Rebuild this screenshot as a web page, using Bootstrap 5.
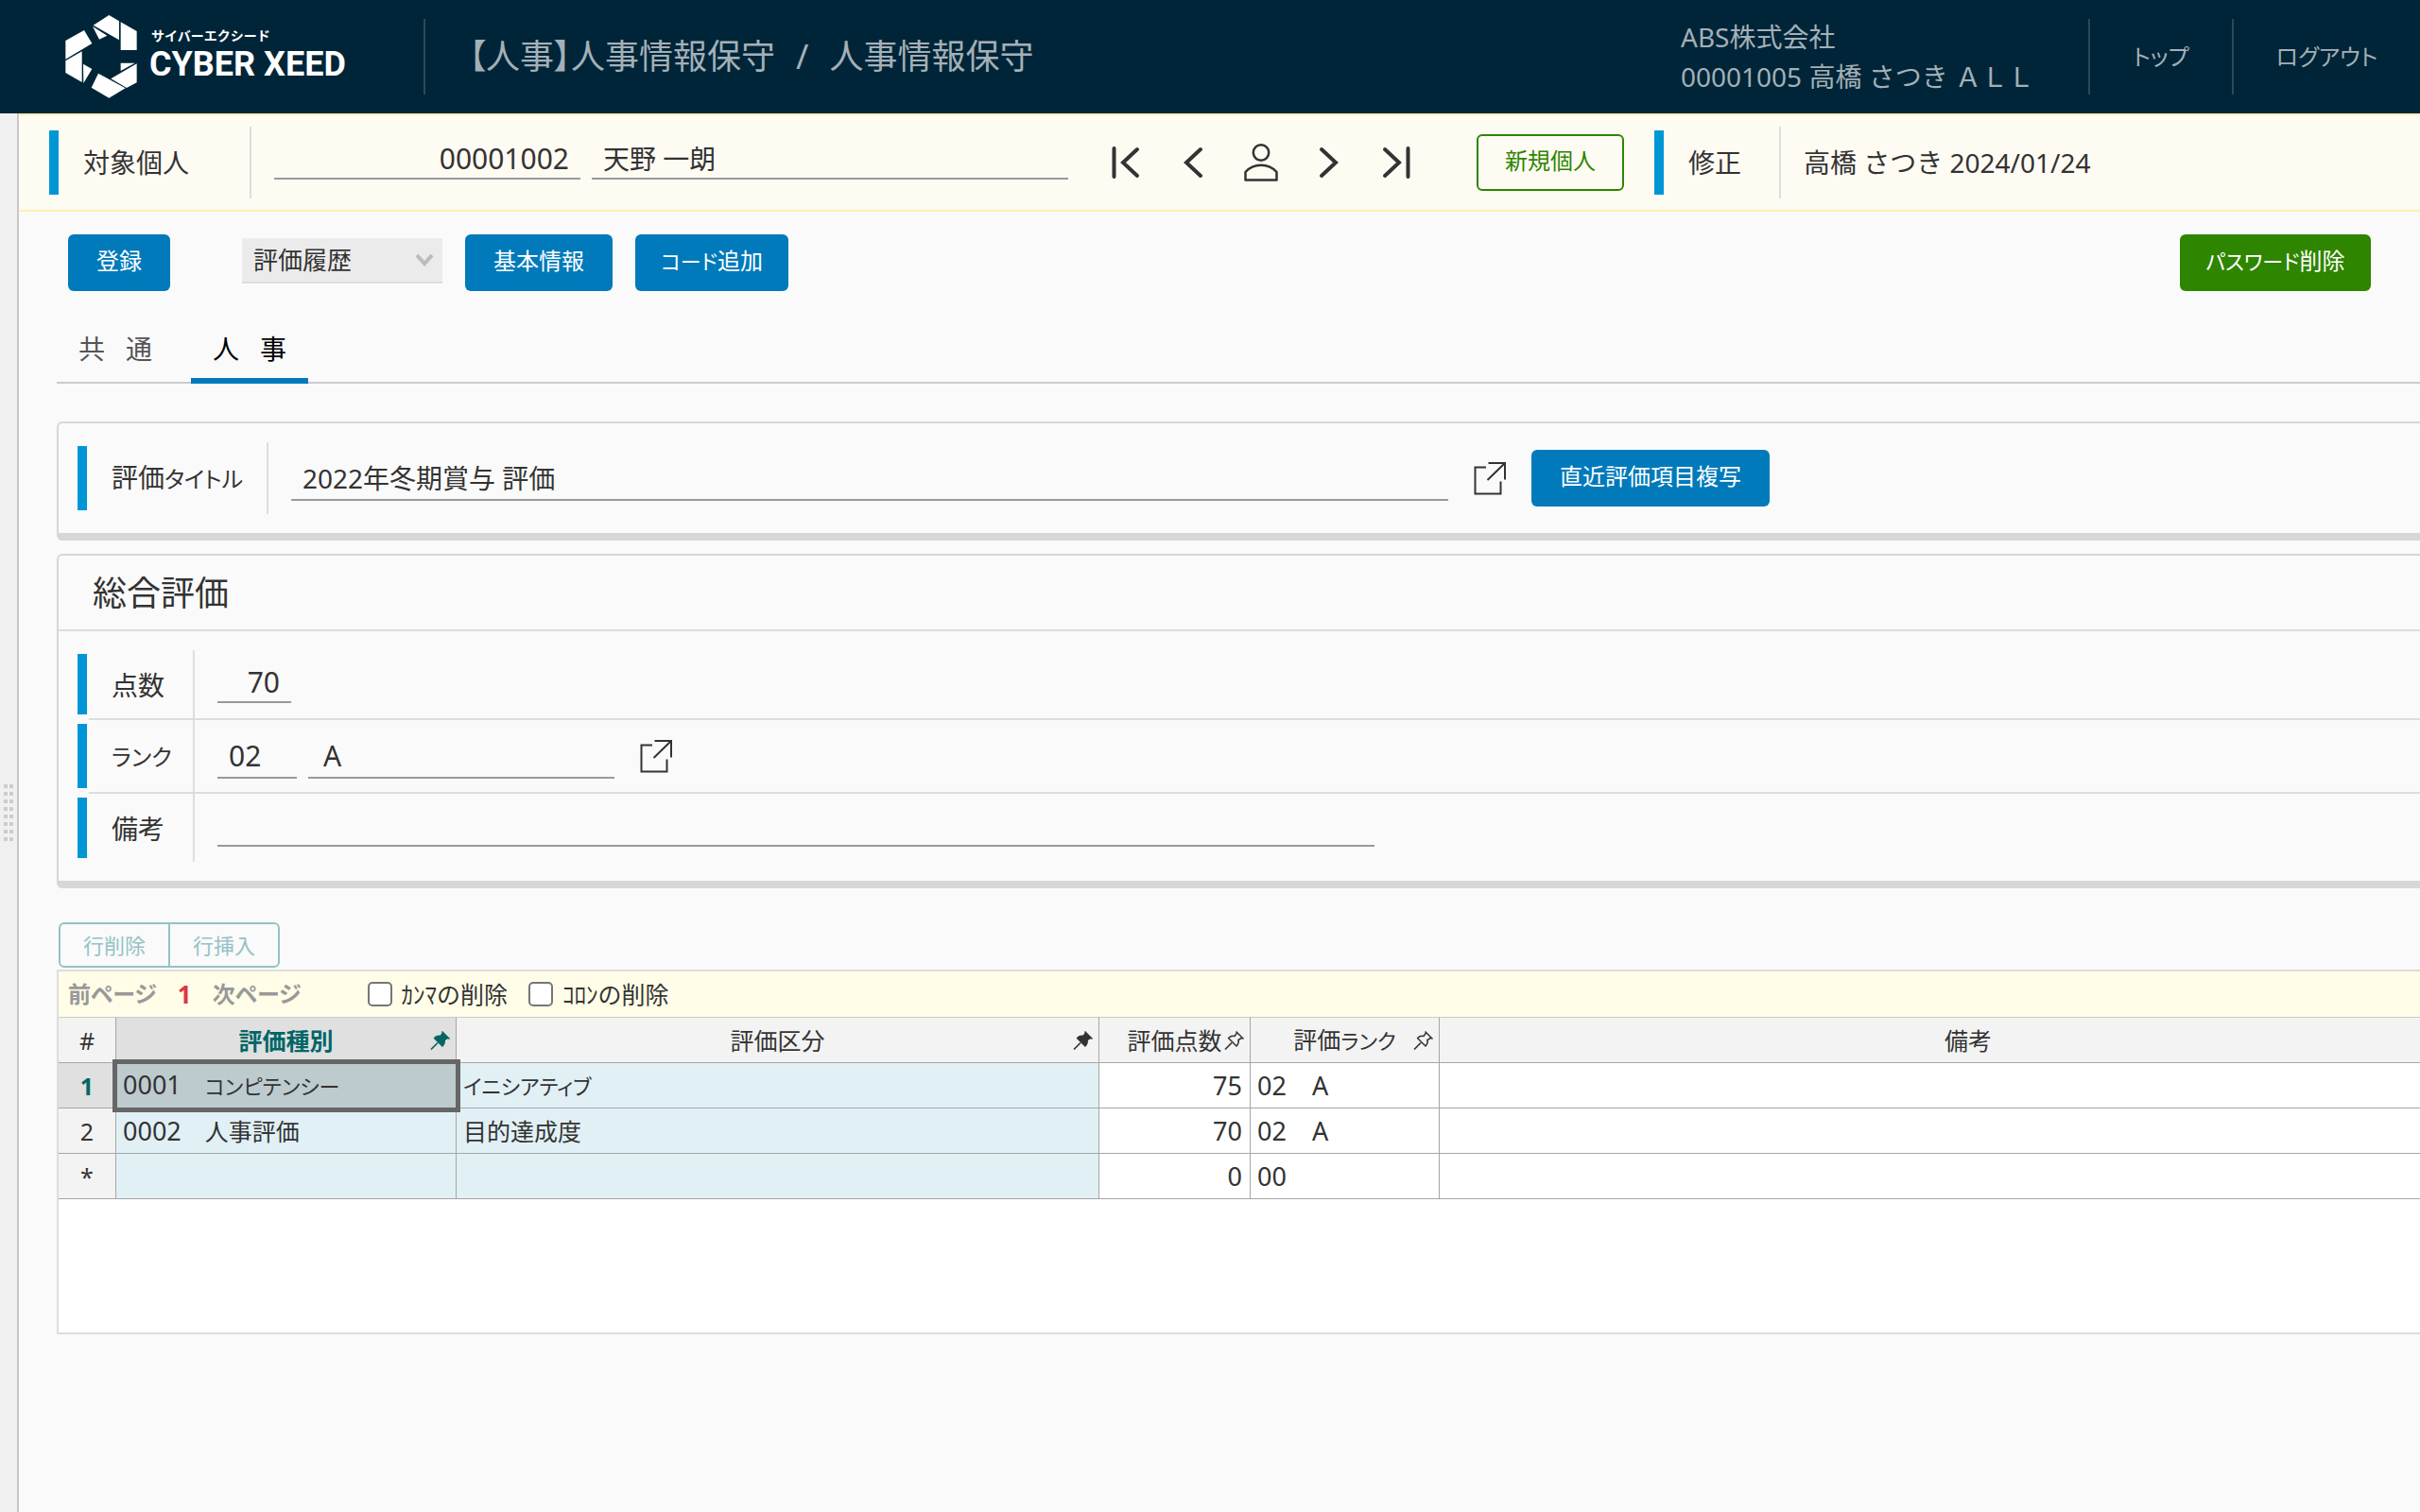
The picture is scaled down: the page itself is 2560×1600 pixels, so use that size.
<!DOCTYPE html>
<html lang="ja">
<head>
<meta charset="utf-8">
<meta name="viewport" content="width=device-width, initial-scale=1">
<title>【人事】人事情報保守 / 人事情報保守</title>
<link href="https://cdn.jsdelivr.net/npm/bootstrap@5.3.0/dist/css/bootstrap.min.css" rel="stylesheet">
<style>
:root{--navy:#002538;--blue:#007aba;--bar:#0096d6;--line:#d7d7d7;--ink:#333;--green:#2e8500;--teal:#006666}
body{font-family:"Noto Sans","Noto Sans CJK JP",sans-serif;font-size:28px;line-height:42px;color:var(--ink);background:#fafafa;overflow-x:hidden}
.kana,.kana-m,.kana-s{font-feature-settings:"palt"}
.kana-m{font-size:24px}
.kana-s{font-size:22px}
a{text-decoration:none;color:inherit}
/* header */
.app-head{background:var(--navy);color:#a3b0b7;height:120px}
.brand{width:450px;height:80px;padding-left:69px;border-right:2px solid #2a4a5a;color:#fff}
.brand-text{margin-left:13px}
.brand-kana{font-size:14px;line-height:16px;font-weight:700;padding-left:2px}
.brand-name{font-family:"Liberation Sans Narrow",Roboto,sans-serif;font-size:36px;line-height:44px;font-weight:700;color:#fff;white-space:nowrap}
.crumbs{font-size:36px;line-height:48px;padding-left:46px;white-space:nowrap}
.crumbs .sep{margin:0 22px}
.user-box{width:431px}
.head-link{height:80px;border-left:2px solid #2a4a5a;font-size:24px}
.head-link.top-link{width:152px}
.head-link.out-link{width:199px}
/* shell */
.side-strip{width:20px;background:#f0f0f0;border-right:2px solid #c8c8c8}
.grip{position:fixed;left:4px;top:830px;width:10px;height:60px;background:repeating-linear-gradient(#f0f0f000 0 4px,#f0f0f0 4px 8px),repeating-linear-gradient(90deg,#ccc 0 4px,#f0f0f0 4px 6px)}
.work{min-height:calc(100vh - 120px);min-width:0}
/* target person bar */
.target-bar{height:104px;background:#fefbf3;border-top:2px solid #fff0b3;border-bottom:2px solid #fff0b3;padding-left:32px}
.f-label{height:76px;border-right:2px solid #ddd;margin:0;white-space:nowrap}
.f-label::before{content:"";width:10px;height:68px;background:var(--bar);margin-right:26px}
.w-target{width:214px}.w-title{width:202px}.w-fix{width:134px}
.line-input{border:0;border-bottom:2px solid #999;background:transparent;color:var(--ink);height:40px;padding:0 12px 2px;border-radius:0;outline:0;min-width:0}
.line-input.tall{height:48px;padding-bottom:0}
.num{text-align:right;font-size:30px}
.code{font-size:30px}
.nav-ico{width:72px;height:40px;border:0;background:none;padding:0 16px;color:var(--ink)}
.nav-ico svg,.pop svg{display:block;fill:none;stroke:currentColor}
.pop{border:0;background:none;padding:0;color:var(--ink)}
.app-btn{--bs-btn-padding-y:0;--bs-btn-padding-x:0;--bs-btn-border-width:0;--bs-btn-border-radius:6px;--bs-btn-font-size:24px;--bs-btn-color:#fff;--bs-btn-bg:var(--blue);--bs-btn-hover-color:#fff;--bs-btn-hover-bg:#0068a0;height:60px;font-size:24px;padding-bottom:4px}
.app-btn.go{--bs-btn-bg:var(--green);--bs-btn-hover-bg:#256b00}
.app-btn.ghost{--bs-btn-border-width:2px;--bs-btn-border-color:var(--green);--bs-btn-bg:transparent;--bs-btn-color:var(--green)}
.w108{width:108px}.w156{width:156px}.w162{width:162px}.w202{width:202px}.w252{width:252px}
/* toolbar, tabs */
.tool-row{padding:24px 52px 0 52px}
.pick{width:212px;height:48px;border:0;border-bottom:2px solid #ddd;background:#ebebeb url("data:image/svg+xml,%3Csvg xmlns='http://www.w3.org/2000/svg' viewBox='0 0 20 14'%3E%3Cpath d='M2 2l8 9 8-9' fill='none' stroke='%23bbb' stroke-width='4'/%3E%3C/svg%3E") no-repeat right 9px top 16px/20px 14px;appearance:none;border-radius:0;font-size:26px;line-height:40px;padding:0 36px 0 12px;color:var(--ink)}
.tab-row{margin:24px 0 0 40px;height:74px;border-bottom:2px solid #ccc;gap:18px}
.tab-row .nav-link{width:124px;height:74px;padding:16px 0 0;text-align:center;color:#555;border-bottom:6px solid transparent;border-radius:0}
.tab-row .nav-link.active{color:#000;border-bottom-color:var(--blue)}
/* panels */
.pane{margin-left:40px;border:2px solid var(--line);border-bottom-width:8px;border-right:0;border-radius:6px 0 0 6px}
.pane-title{height:80px;border-bottom:2px solid #ddd;font-size:36px;line-height:80px;font-weight:400;padding-left:36px;margin:0}
.pane-row{height:74px}
.pane-row.r-mid{height:78px}.pane-row.r-end{height:72px}
.pane-row::before{content:"";flex:none;width:10px;background:var(--bar);margin:4px 2px 6px 0}
.pane-row.r-end::before{margin-bottom:4px}
.row-body{border-bottom:2px solid #ddd}
.r-end .row-body{border-bottom:0}
.row-body label{width:112px;padding:2px 0 0 24px;border-right:2px solid #ddd;margin-right:24px}
/* grid */
.row-tools{margin:36px 0 2px 42px}
.row-tools .btn{--bs-btn-disabled-opacity:1;width:118px;height:48px;padding:0;font-size:22px;line-height:40px;border:2px solid #95c2c5;color:#95c2c5;border-radius:6px}
.row-tools .btn:disabled{color:#95c2c5;border-color:#95c2c5}
.row-tools .btn-group>.btn+.btn{margin-left:-2px}
.sheet{margin-left:40px;border:2px solid #ddd;border-right:0;background:#fff;min-height:386px;overflow:hidden;font-size:25px}
.pager{height:48px;background:#fffde7;padding-left:10px}
.pager-word{color:#999;font-weight:700}
.pager-now{color:#dc3545;font-weight:700;font-size:26px;margin:0 22px}
.pager .form-check-input{width:26px;height:26px;margin:0 10px 0 0;border:2px solid #767676;border-radius:5px;background-color:#fff}
.data-tbl{width:calc(100% + 82px);table-layout:fixed;border-collapse:separate;border-spacing:0;line-height:40px}
.data-tbl th,.data-tbl td{height:48px;padding:0 8px 0 7px;border-right:1px solid #a6a6a6;border-bottom:1px solid #a6a6a6;font-weight:400;white-space:nowrap}
.data-tbl thead th{height:49px;border-top:1px solid #ccc;background:#f3f3f3;text-align:center;padding:0}
.data-tbl tbody th{background:#f3f3f3;text-align:center;padding:0}
.data-tbl .key{background:#e1f0f5}
.data-tbl thead .on,.data-tbl tbody .on{background:#e0e0e0;color:var(--teal);font-weight:700}
.data-tbl .sel{background:#bdcbcf;outline:5px solid #666;outline-offset:-1px}
.cell-code{font-size:27px}
.h3c{display:grid;grid-template-columns:1fr auto 1fr;align-items:center}
.h3c svg{grid-column:3;justify-self:end;margin-right:5px}
.h3c>span{grid-column:2}
.pin{width:22px;height:22px;stroke:currentColor;fill:none}
.pin.full{fill:currentColor}
</style>
</head>
<body>
<svg width="0" height="0" class="position-absolute" aria-hidden="true">
<symbol id="pin" viewBox="0 0 22 22"><path d="M12.500 1.500l8 8M13.500 3l-2.500 3.500c-2-.5-4.500 0-6.500 2l8.500 8.500c2-2 2.500-4.500 2-6.500L19 8" stroke-width="1.500" stroke-linejoin="round"/><path d="M8 13.500L1 20.500" stroke-width="1.700"/></symbol>
<symbol id="pop" viewBox="0 0 36 36"><path d="M14 6.500H2.500v28h27V21.500M16.500 2h17.500v17.500M34 2L15.500 20" stroke-width="2"/></symbol>
</svg>
<header class="app-head d-flex align-items-center">
<div class="brand d-flex align-items-center flex-shrink-0">
<svg width="76" height="88" viewBox="27 18 228 264" fill="#fff" class="flex-shrink-0" aria-hidden="true"><path d="M166 18l32 19v60l-82-47zM114 54l46 29-25 12zM203 40l51 29v60h-51zM87 66l25 42-84 50V99zM28 163l52-30v98l-52-30zM84 173l28 16-27 45zM132 203l86 47-52 31-56-33zM254 172v60l-32 17-50-29zM203 170h45l-45 25z"/></svg>
<div class="brand-text"><div class="brand-kana">サイバーエクシード</div><div class="brand-name">CYBER XEED</div></div>
</div>
<div class="crumbs kana">【人事】人事情報保守<span class="sep">/</span>人事情報保守</div>
<div class="user-box ms-auto text-nowrap"><div>ABS株式会社</div><div>00001005 高橋 さつき ＡＬＬ</div></div>
<a href="#" class="head-link top-link kana d-flex align-items-center justify-content-center">トップ</a>
<a href="#" class="head-link out-link kana d-flex align-items-center justify-content-center">ログアウト</a>
</header>
<div class="d-flex">
<aside class="side-strip flex-shrink-0"><div class="grip"></div></aside>
<main class="work flex-grow-1">
<section class="target-bar d-flex align-items-center">
<label class="f-label w-target d-flex align-items-center" for="pcode">対象個人</label>
<input id="pcode" class="line-input num mb-1 ms-4" style="width:324px" value="00001002">
<input aria-label="氏名" class="line-input mb-1" style="width:504px;margin-left:12px" value="天野 一朗">
<div class="d-flex ms-4">
<button class="nav-ico" aria-label="先頭"><svg width="40" height="40" viewBox="0 0 40 40" stroke-width="4" stroke-linecap="round"><path d="M8.500 5v30M33 6L18 20l15 14"/></svg></button>
<button class="nav-ico" aria-label="前へ"><svg width="40" height="40" viewBox="0 0 40 40" stroke-width="4" stroke-linecap="round"><path d="M28 6L13 20l15 14"/></svg></button>
<button class="nav-ico" aria-label="個人検索"><svg width="40" height="40" viewBox="0 0 40 40" stroke-width="2.500"><circle cx="20" cy="9.500" r="8.200"/><path d="M3.500 38.500V30C7 26 13 22.700 20 22.700S33 26 36.500 30v8.500z" stroke-linejoin="round"/></svg></button>
<button class="nav-ico" aria-label="次へ"><svg width="40" height="40" viewBox="0 0 40 40" stroke-width="4" stroke-linecap="round"><path d="M12 6l15 14-15 14"/></svg></button>
<button class="nav-ico" aria-label="最後"><svg width="40" height="40" viewBox="0 0 40 40" stroke-width="4" stroke-linecap="round"><path d="M31.500 5v30M7 6l15 14L7 34"/></svg></button>
</div>
<button class="btn app-btn ghost w156" style="margin-left:48px">新規個人</button>
<div class="f-label w-fix d-flex align-items-center" style="margin-left:32px">修正</div>
<div class="text-nowrap ms-4">高橋 さつき 2024/01/24</div>
</section>
<div class="tool-row d-flex">
<button class="btn app-btn w108">登録</button>
<select class="pick" style="margin:4px 24px 0 76px" aria-label="表示項目"><option>評価履歴</option></select>
<button class="btn app-btn w156">基本情報</button>
<button class="btn app-btn w162 ms-4"><span class="kana-s">コード</span>追加</button>
<button class="btn app-btn go w202 ms-auto"><span class="kana-s">パスワード</span>削除</button>
</div>
<nav class="tab-row nav flex-nowrap">
<a class="nav-link" href="#">共&nbsp;&nbsp;&nbsp;通</a>
<a class="nav-link active" href="#" aria-current="page">人&nbsp;&nbsp;&nbsp;事</a>
</nav>
<section class="pane d-flex align-items-center" style="margin-top:40px;padding:20px 0 20px 20px">
<label class="f-label w-title d-flex align-items-center" for="etitle"><span>評価<span class="kana-m">タイトル</span></span></label>
<input id="etitle" class="line-input tall ms-4" style="width:1224px" value="2022年冬期賞与 評価">
<button class="pop" style="margin:0 26px" aria-label="評価タイトル参照"><svg width="36" height="36"><use href="#pop"/></svg></button>
<button class="btn app-btn w252">直近評価項目複写</button>
</section>
<section class="pane" style="margin-top:14px">
<h2 class="pane-title">総合評価</h2>
<div style="padding:20px 0 20px 20px">
<div class="pane-row d-flex"><div class="row-body d-flex flex-grow-1 align-items-center">
<label for="pt" class="d-flex align-items-center align-self-stretch">点数</label><input id="pt" class="line-input num" style="width:78px" value="70"></div></div>
<div class="pane-row r-mid d-flex"><div class="row-body d-flex flex-grow-1 align-items-center">
<label for="rk" class="kana-m d-flex align-items-center align-self-stretch">ランク</label><input id="rk" class="line-input code tall" style="width:84px" value="02"><input aria-label="ランク名" class="line-input code tall" style="width:324px;margin-left:12px;padding-left:16px" value="A">
<button class="pop" style="margin-left:26px" aria-label="ランク参照"><svg width="36" height="36"><use href="#pop"/></svg></button></div></div>
<div class="pane-row r-end d-flex"><div class="row-body d-flex flex-grow-1 align-items-center">
<label for="memo" class="d-flex align-items-center align-self-stretch">備考</label><input id="memo" class="line-input" style="width:1224px"></div></div>
</div>
</section>
<div class="row-tools d-flex"><div class="btn-group"><button class="btn" disabled>行削除</button><button class="btn" disabled>行挿入</button></div></div>
<section class="sheet">
<div class="pager d-flex align-items-center text-nowrap">
<a href="#" class="pager-word kana-m">前ページ</a><span class="pager-now">1</span><a href="#" class="pager-word kana-m">次ページ</a>
<input type="checkbox" class="form-check-input" id="cm" style="margin-left:70px"><label for="cm">ｶﾝﾏの削除</label>
<input type="checkbox" class="form-check-input" id="cl" style="margin-left:22px"><label for="cl">ｺﾛﾝの削除</label>
</div>
<table class="data-tbl">
<colgroup><col style="width:61px"><col style="width:360px"><col style="width:680px"><col style="width:160px"><col style="width:200px"><col></colgroup>
<thead><tr>
<th>#</th>
<th class="on"><div class="h3c"><span>評価種別</span><svg class="pin full"><use href="#pin"/></svg></div></th>
<th><div class="h3c"><span>評価区分</span><svg class="pin full"><use href="#pin"/></svg></div></th>
<th><div class="h3c"><span>評価点数</span><svg class="pin"><use href="#pin"/></svg></div></th>
<th><div class="h3c"><span>評価<span class="kana-s">ランク</span></span><svg class="pin"><use href="#pin"/></svg></div></th>
<th>備考</th>
</tr></thead>
<tbody>
<tr><th class="on">1</th><td class="key sel"><span class="cell-code">0001</span>　<span class="kana-s">コンピテンシー</span></td><td class="key kana-s">イニシアティブ</td><td class="text-end cell-code">75</td><td class="cell-code">02　A</td><td></td></tr>
<tr><th>2</th><td class="key"><span class="cell-code">0002</span>　人事評価</td><td class="key">目的達成度</td><td class="text-end cell-code">70</td><td class="cell-code">02　A</td><td></td></tr>
<tr><th>*</th><td class="key"></td><td class="key"></td><td class="text-end cell-code">0</td><td class="cell-code">00</td><td></td></tr>
</tbody>
</table>
</section>
</main>
</div>
<script src="https://cdn.jsdelivr.net/npm/bootstrap@5.3.0/dist/js/bootstrap.bundle.min.js"></script>
</body>
</html>
